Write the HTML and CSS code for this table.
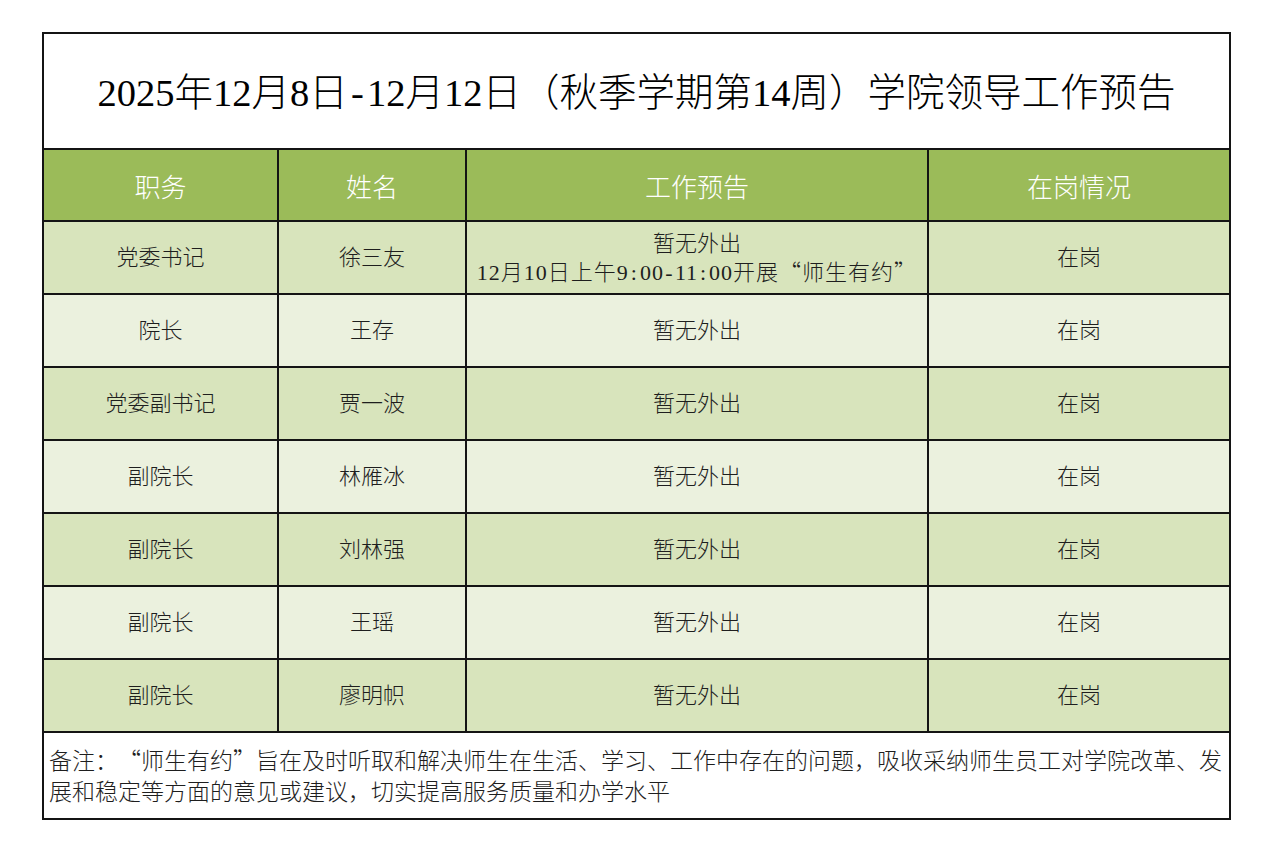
FILE: index.html
```html
<!DOCTYPE html>
<html lang="zh-CN">
<head>
<meta charset="utf-8">
<title>学院领导工作预告</title>
<link rel="stylesheet" href="styles.css">
</head>
<body>
<table class="sheet">
  <colgroup>
    <col class="c1"><col class="c2"><col class="c3"><col class="c4">
  </colgroup>
  <tr class="title-row">
    <td colspan="4" class="title">2025年12月8日<span class="h">-</span>12月12日<span class="q">（</span>秋季学期第14周<span class="q">）</span>学院领导工作预告</td>
  </tr>
  <tr class="head">
    <th>职务</th><th>姓名</th><th>工作预告</th><th>在岗情况</th>
  </tr>
  <tr class="row odd">
    <td>党委书记</td><td>徐三友</td><td class="two">暂无外出<br><span class="wide">12月10日上午9<span class="h">:</span>00<span class="h">-</span>11<span class="h">:</span>00开展<span class="q">“</span>师生有约<span class="q">”</span></span></td><td>在岗</td>
  </tr>
  <tr class="row even">
    <td>院长</td><td>王存</td><td>暂无外出</td><td>在岗</td>
  </tr>
  <tr class="row odd">
    <td>党委副书记</td><td>贾一波</td><td>暂无外出</td><td>在岗</td>
  </tr>
  <tr class="row even">
    <td>副院长</td><td>林雁冰</td><td>暂无外出</td><td>在岗</td>
  </tr>
  <tr class="row odd">
    <td>副院长</td><td>刘林强</td><td>暂无外出</td><td>在岗</td>
  </tr>
  <tr class="row even">
    <td>副院长</td><td>王瑶</td><td>暂无外出</td><td>在岗</td>
  </tr>
  <tr class="row odd">
    <td>副院长</td><td>廖明帜</td><td>暂无外出</td><td>在岗</td>
  </tr>
  <tr class="note-row">
    <td colspan="4" class="note"><span class="q">备注：“师生有约”旨在及时听取和解决师生在生活、学习、工作中存在的问题，吸收采纳师生员工对学院改革、发展和稳定等方面的意见或建议，切实提高服务质量和办学水平</span></td>
  </tr>
</table>
</body>
</html>
```

FILE: styles.css
```css
html, body {
  margin: 0;
  padding: 0;
  background: #ffffff;
}

body {
  font-family: "Liberation Serif", "Noto Sans CJK SC", serif;
  color: #1e1e1e;
  text-spacing-trim: space-all;
}

.sheet {
  margin: 32px 0 0 42px;
  width: 1187px;
  border-collapse: collapse;
  table-layout: fixed;
}

.c1 { width: 235px; }
.c2 { width: 188px; }
.c3 { width: 462px; }
.c4 { width: 302px; }

.sheet td,
.sheet th {
  border: 2px solid #141414;
  padding: 0;
  text-align: center;
  vertical-align: middle;
}

.q {
  font-family: "Noto Sans CJK SC", sans-serif;
  text-spacing-trim: space-all;
}

.h {
  display: inline-block;
  width: 0.5em;
  text-align: center;
}

.title {
  height: 114px;
  font-size: 38.5px;
  line-height: 44px;
  color: #000;
  font-weight: 300;
  background: #fff;
}

.head th {
  height: 70px;
  background: #9bbb59;
  color: #ffffff;
  font-size: 26px;
  font-weight: 300;
}

.row td {
  height: 71px;
  font-size: 22px;
  font-weight: 300;
  line-height: 28px;
}

.row .two {
  line-height: 27px;
}

.wide {
  letter-spacing: 1px;
}

.odd td { background: #d8e4bc; }
.even td { background: #ebf1de; }

.note {
  height: 73px;
  text-align: left !important;
  vertical-align: top !important;
  font-size: 23px;
  font-weight: 300;
  line-height: 29px;
  padding: 12px 2px 0 5px !important;
  background: #fff;
}
```
